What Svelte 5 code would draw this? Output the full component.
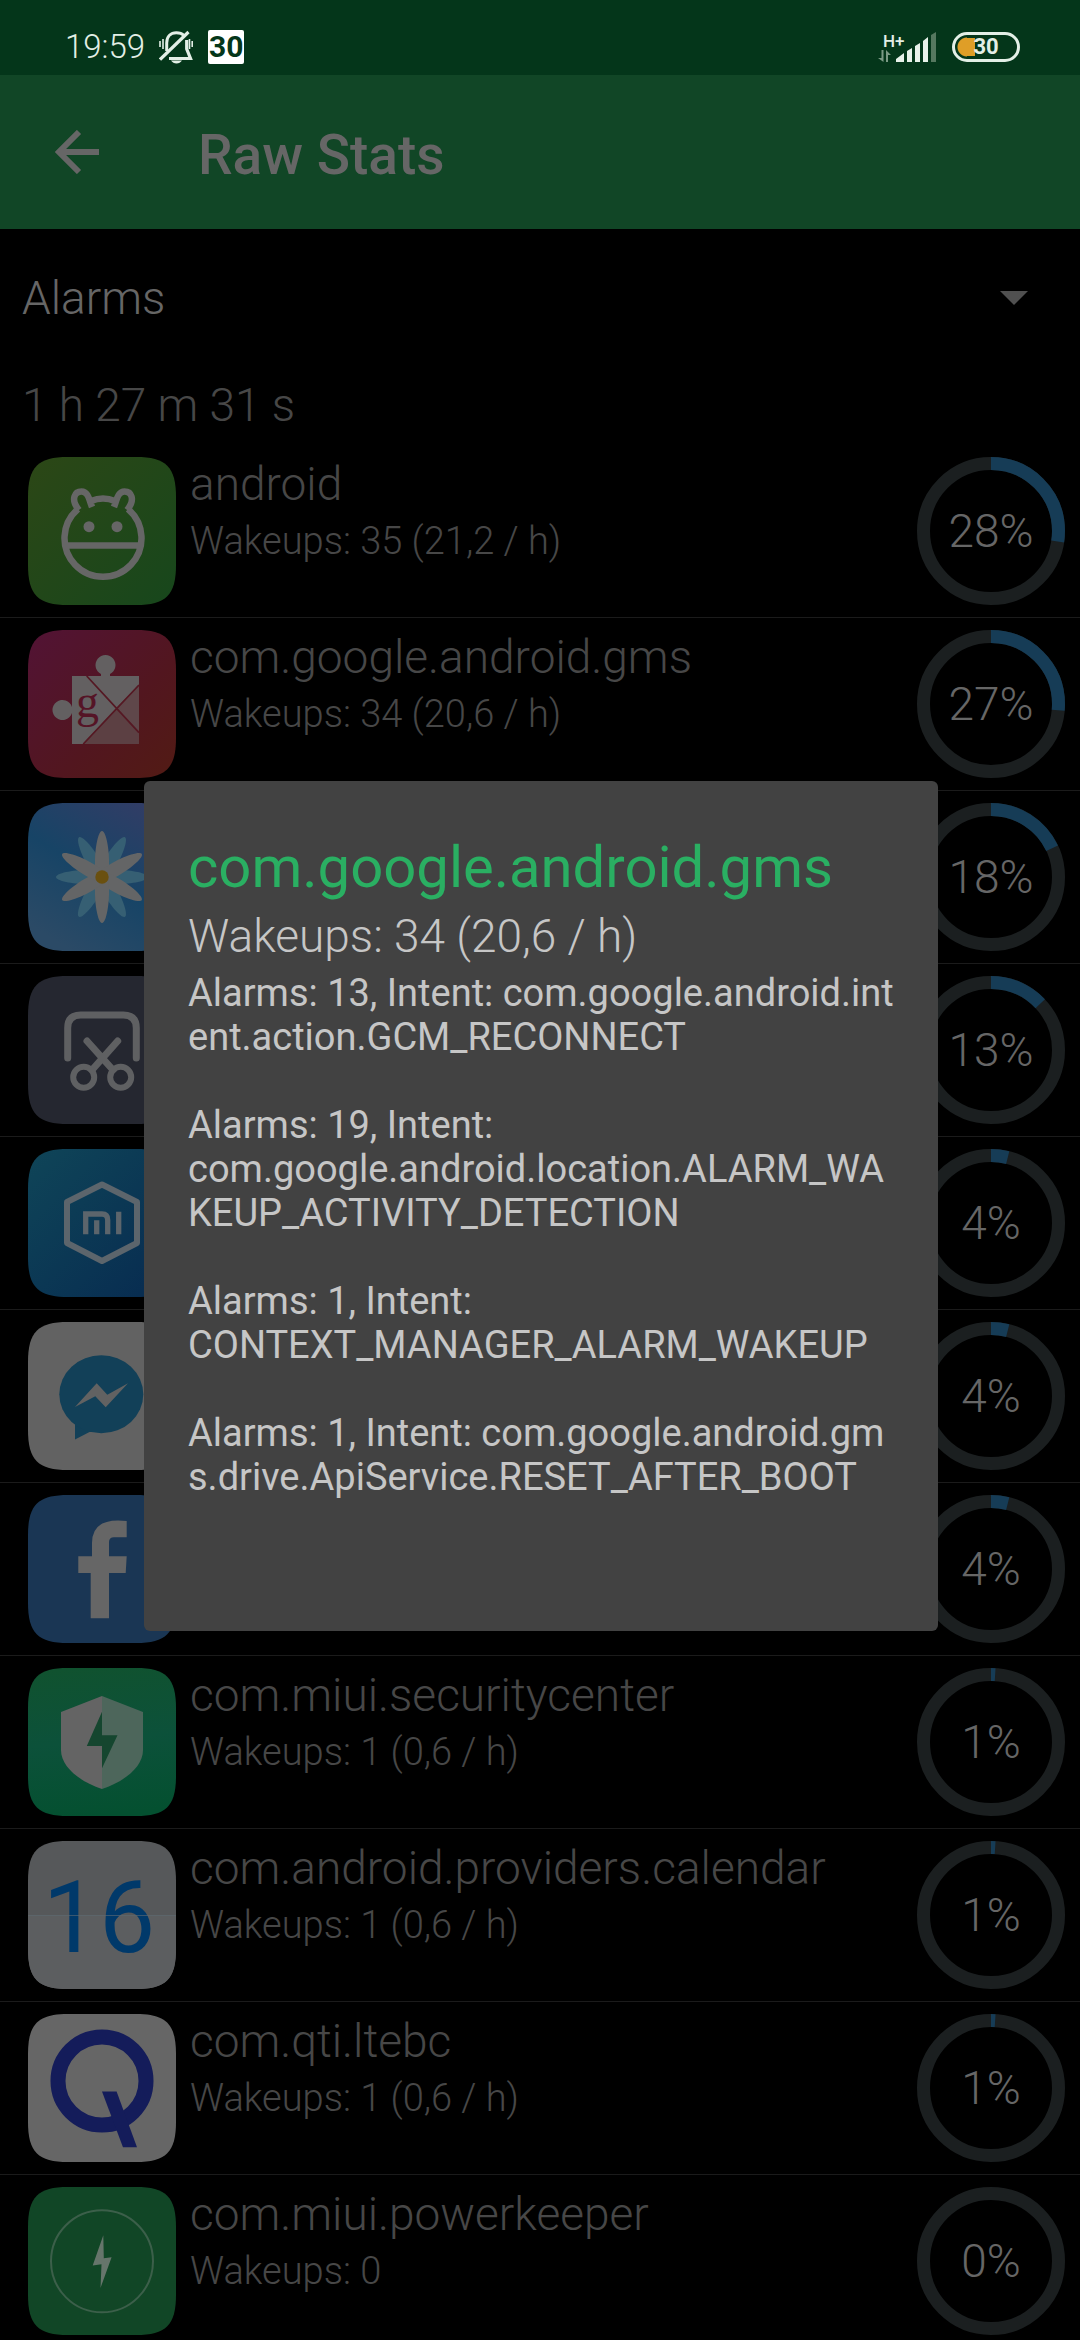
<script>
  const stats = [
    { icon: 'android', name: 'android', wakeups: '35 (21,2 / h)', percent: 28, arc: 27.5 },
    { icon: 'gms', name: 'com.google.android.gms', wakeups: '34 (20,6 / h)', percent: 27, arc: 26.5 },
    { icon: 'gallery', name: 'com.miui.gallery', wakeups: '23 (13,9 / h)', percent: 18, arc: 18 },
    { icon: 'scissors', name: 'com.miui.screenshot', wakeups: '16 (9,7 / h)', percent: 13, arc: 13 },
    { icon: 'mi', name: 'com.xiaomi.xmsf', wakeups: '5 (3,0 / h)', percent: 4, arc: 4 },
    { icon: 'messenger', name: 'com.facebook.orca', wakeups: '5 (3,0 / h)', percent: 4, arc: 4 },
    { icon: 'facebook', name: 'com.facebook.katana', wakeups: '5 (3,0 / h)', percent: 4, arc: 4 },
    { icon: 'security', name: 'com.miui.securitycenter', wakeups: '1 (0,6 / h)', percent: 1, arc: 1 },
    { icon: 'calendar', name: 'com.android.providers.calendar', wakeups: '1 (0,6 / h)', percent: 1, arc: 1 },
    { icon: 'qti', name: 'com.qti.ltebc', wakeups: '1 (0,6 / h)', percent: 1, arc: 1 },
    { icon: 'power', name: 'com.miui.powerkeeper', wakeups: '0', percent: 0, arc: 0 }
  ]

  const alarms = [
    'Alarms: 13, Intent: com.google.android.int\nent.action.GCM_RECONNECT',
    'Alarms: 19, Intent:\ncom.google.android.location.ALARM_WA\nKEUP_ACTIVITY_DETECTION',
    'Alarms: 1, Intent:\nCONTEXT_MANAGER_ALARM_WAKEUP',
    'Alarms: 1, Intent: com.google.android.gm\ns.drive.ApiService.RESET_AFTER_BOOT'
  ]

  // rows the dialog lies over keep only their icon and ring
  const selected = stats[1]
  const covered = ['gallery', 'scissors', 'mi', 'messenger', 'facebook']

  const tile = 'M74 0H108C138 0 148 10 148 40V108C148 138 138 148 108 148H40C10 148 0 138 0 108V40C0 10 10 0 40 0Z'
  const petal = 'M68 72C65 56 69 28 74 28S83 56 80 72Z'
</script>

<div class="screen">
  <div class="status">
    <span class="clock">19:59</span>
    <svg class="bell" width="34" height="34" viewBox="0 0 34 34" fill="none" stroke="#e3efe6">
      <path d="M7.7 21V13C7.7 6 12 2.7 17.3 2.7C20.500 2.700 23 3.500 25 5.500" stroke-width="3" />
      <path d="M27.700 10V19L31.500 28.500H10" stroke-width="3.200" />
      <path d="M1 29.500L29.500 2" stroke-width="3.200" />
      <path d="M12 30.500H23Q21 33.500 17.500 33.500T12 30.500Z" fill="#e3efe6" stroke="none" />
      <path d="M1 11V17M4 9V19M30.500 9V19M33.200 11V17" stroke-width="1.600" />
    </svg>
    <span class="day">30</span>
    <div class="status-right">
      <div class="network">
        <span>H+</span>
        <svg width="14" height="12" viewBox="0 0 14 12" fill="#7b9a85">
          <path d="M3.500 0H5.500V12L0 8H3.500ZM8 12V0L13 5H10V12Z" />
        </svg>
      </div>
      <svg class="signal" width="40" height="30" viewBox="0 0 40 30" fill="#e8f2ea">
        <path d="M0 30V27L8 21V30ZM11 30V19L16 16V30ZM19 30V14L24 11V30ZM27 30V9L32 5V30Z" />
        <path d="M35 30V3L40 0V30Z" fill="#55785f" />
      </svg>
      <span class="battery">30</span>
    </div>
  </div>

  <header>
    <button class="back" aria-label="Back">
      <svg width="44" height="44" viewBox="0 0 44 44" fill="none" stroke="#666" stroke-width="6">
        <path d="M44 22H5M24 2L4 22L24 42" />
      </svg>
    </button>
    <h1>Raw Stats</h1>
  </header>

  <main>
    <div class="picker">
      <select aria-label="Statistic">
        <option>Alarms</option>
      </select>
      <svg width="28" height="14" viewBox="0 0 28 14"><path d="M0 0H28L14 14Z" fill="#505050" /></svg>
    </div>
    <p class="duration">1 h 27 m 31 s</p>

    <ul>
      {#each stats as stat}
        <li>
          <svg class="icon" viewBox="0 0 148 148" aria-hidden="true">
            {#if stat.icon === 'android'}
              <defs>
                <linearGradient id="android-bg" x1="0" y1="0" x2="1" y2="1">
                  <stop offset="0" stop-color="#2c4716" />
                  <stop offset="1" stop-color="#17471c" />
                </linearGradient>
              </defs>
              <path d={tile} fill="url(#android-bg)" />
              <g fill="none" stroke="#666" stroke-width="6.500">
                <path d="M50 52A38.500 38.500 0 1 0 100 52M38 88.500H112" />
                <path d="M51 53C42 42 47 34.500 53.500 34.500C60 34.500 61 42 64 50M63 44Q75 39 87 44M99 53C108 42 103 34.500 96.500 34.500C90 34.500 89 42 86 50" />
              </g>
              <circle cx="61" cy="69.700" r="5.500" fill="#666" />
              <circle cx="89" cy="69.700" r="5.500" fill="#666" />
            {:else if stat.icon === 'gms'}
              <defs>
                <linearGradient id="gms-bg" x1="0" y1="0" x2="1" y2="1">
                  <stop offset="0" stop-color="#521335" />
                  <stop offset=".6" stop-color="#52161f" />
                  <stop offset="1" stop-color="#521b14" />
                </linearGradient>
              </defs>
              <path d={tile} fill="url(#gms-bg)" />
              <path d="M44 46H73V44A10 10 0 1 1 82 44V46H111V114H44V83A10 10 0 1 1 44 77Z" fill="#636061" />
              <path d="M111 55V114H55L88 78Z" fill="#5c4043" />
              <path d="M88 78L111 55V103Z" fill="#5f474a" />
              <path d="M58.700 46L111 102.700M111 55L55.300 114" stroke="#551823" stroke-width="1.800" />
              <text x="48" y="87" font-family="Liberation Serif, serif" font-size="46" font-weight="400" fill="#551426">g</text>
            {:else if stat.icon === 'gallery'}
              <defs>
                <linearGradient id="gallery-bg" x1=".9" y1="0" x2=".3" y2="1">
                  <stop offset="0" stop-color="#343c66" />
                  <stop offset=".55" stop-color="#174466" />
                  <stop offset="1" stop-color="#2b4a66" />
                </linearGradient>
              </defs>
              <path d={tile} fill="url(#gallery-bg)" />
              {#each [30, 90, 150, 210, 270, 330] as angle}
                <path d={petal} fill="#365f73" transform="rotate({angle} 74 74)" />
              {/each}
              {#each [0, 60, 120, 180, 240, 300] as angle}
                <path d={petal} fill="#646566" transform="rotate({angle} 74 74)" />
              {/each}
              <circle cx="74" cy="74" r="6.700" fill="#6a5010" />
            {:else if stat.icon === 'scissors'}
              <path d={tile} fill="#252730" />
              <g fill="none" stroke="#5f6062" stroke-width="7" stroke-linecap="round">
                <path d="M39.700 82V52Q39.700 39 52.700 39H95.300Q108.300 39 108.300 52V82" />
                <path d="M59 65L85 94M89.700 65L64 94" />
                <circle cx="55.700" cy="101.300" r="10.500" stroke-width="6" />
                <circle cx="92.700" cy="101.300" r="10.500" stroke-width="6" />
              </g>
            {:else if stat.icon === 'mi'}
              <defs>
                <linearGradient id="mi-bg" x1="0" y1="0" x2="1" y2="1">
                  <stop offset="0" stop-color="#0f4558" />
                  <stop offset="1" stop-color="#072a50" />
                </linearGradient>
              </defs>
              <path d={tile} fill="url(#mi-bg)" />
              <g fill="none" stroke="#5c656c" stroke-width="6" stroke-linejoin="round">
                <path d="M74 35.500L109 53V94L74 112L39 94V53Z" />
                <path d="M57.700 85.300V65H74Q79.700 65 79.700 71V85.300M68.700 71.300V85.300M90.700 62.700V85.300" stroke-width="5.300" stroke-linejoin="miter" />
              </g>
            {:else if stat.icon === 'messenger'}
              <path d={tile} fill="#626262" />
              <path d="M47 98V117.500L61.500 110H74V98Z" fill="#124058" />
              <ellipse cx="73.300" cy="72.300" rx="42" ry="39" fill="#124058" />
              <path d="M47 85L68.700 61.300L79.300 72.700L100 61.300L77.700 85.300L67.300 74.300Z" fill="#626262" />
            {:else if stat.icon === 'facebook'}
              <path d={tile} fill="#1a3654" />
              <path d="M62.700 123.300H81V78H97.700L98.700 61.300H81V47Q81 42.300 86 42.300H98.700V26Q64 22 64 48V61.300H50.300V78H62.700Z" fill="#666" />
            {:else if stat.icon === 'security'}
              <defs>
                <linearGradient id="security-bg" x1=".3" y1="0" x2=".4" y2="1">
                  <stop offset="0" stop-color="#10522f" />
                  <stop offset=".5" stop-color="#0c513a" />
                  <stop offset="1" stop-color="#045030" />
                </linearGradient>
              </defs>
              <path d={tile} fill="url(#security-bg)" />
              <path d="M74 28L33 44V82C33 98 50 113 74 121Z" fill="#646464" />
              <path d="M74 28L115 44V82C115 98 98 113 74 121Z" fill="#4d665b" />
              <path d="M74 43.700L58.800 78H74V100.300L89.500 67.300H74Z" fill="#15462f" />
            {:else if stat.icon === 'calendar'}
              <path d={tile} fill="#56585a" />
              <path d="M0 74.500H148V108C148 138 138 148 108 148H40C10 148 0 138 0 108Z" fill="#5c5e60" />
              <text x="71" y="111" text-anchor="middle" font-size="100" font-weight="400" fill="#00396a">16</text>
              <path d="M0 74.500H148" stroke="#5f6c74" stroke-width="1" opacity=".6" />
            {:else if stat.icon === 'qti'}
              <path d={tile} fill="#666" />
              <circle cx="74" cy="67" r="44" fill="none" stroke="#141c5a" stroke-width="15" />
              <path d="M74 77.400H88.600L109 133.300H95Z" fill="#141c5a" />
            {:else}
              <path d={tile} fill="#114626" />
              <circle cx="74" cy="74.300" r="51" fill="none" stroke="#3c5f4a" stroke-width="2" />
              <path d="M75.300 48.300L64.700 78.600L73.500 77.300L72.500 101L83.600 70.300L75.800 71.300Z" fill="#66756b" />
            {/if}
          </svg>

          <div class="info">
            {#if !covered.includes(stat.icon)}
              <h2>{stat.name}</h2>
              <p>Wakeups: {stat.wakeups}</p>
            {/if}
          </div>

          <div class="ring">
            <svg viewBox="0 0 148 148" fill="none" stroke-width="13" aria-hidden="true">
              <circle cx="74" cy="74" r="67.500" stroke="#1b1f20" />
              {#if stat.arc}
                <circle
                  cx="74"
                  cy="74"
                  r="67.500"
                  stroke="#163c56"
                  pathLength="100"
                  stroke-dasharray="{stat.arc} 100"
                  transform="rotate(-90 74 74)"
                />
              {/if}
            </svg>
            <span>{stat.percent}%</span>
          </div>
        </li>
      {/each}
    </ul>
  </main>

  <div class="overlay">
    <div class="dialog" role="dialog" aria-modal="true" aria-labelledby="dialog-title">
      <h2 id="dialog-title">{selected.name}</h2>
      <p class="wakeups">Wakeups: {selected.wakeups}</p>
      <div class="alarms">
        {#each alarms as alarm}
          <p>{alarm}</p>
        {/each}
      </div>
    </div>
  </div>
</div>

<style>
  :global(body) {
    margin: 0;
    background: #000;
  }

  .screen {
    display: flex;
    flex-direction: column;
    height: 100vh;
    overflow: hidden;
    background: #000;
    color: #474747;
    font-family: Roboto, sans-serif;
    font-weight: 300;
  }

  h1,
  h2,
  p,
  ul {
    margin: 0;
    padding: 0;
    font-weight: inherit;
  }

  svg {
    display: block;
    flex: none;
  }

  .status {
    display: flex;
    flex: none;
    align-items: center;
    box-sizing: border-box;
    height: 75px;
    padding: 18px 60px 0 65px;
    background: #04361a;
    color: #e3efe6;
  }

  .clock {
    font-size: 33px;
    line-height: 36px;
  }

  .bell {
    margin: 0 15px 0 14px;
  }

  .day {
    display: flex;
    align-items: center;
    justify-content: center;
    width: 36px;
    height: 34px;
    border-radius: 2px;
    background: #fff;
    color: #04361a;
    font-size: 30px;
    font-weight: 700;
  }

  .status-right {
    display: flex;
    align-items: flex-end;
    margin-left: auto;
  }

  .network {
    display: flex;
    flex-direction: column;
    width: 26px;
    margin-right: -8px;
  }

  .network span {
    margin-left: 5px;
    font-size: 17px;
    font-weight: 500;
    line-height: 18px;
  }

  .signal {
    margin-right: 16px;
  }

  .battery {
    display: flex;
    align-items: center;
    justify-content: center;
    box-sizing: border-box;
    width: 68px;
    height: 30px;
    border: 3px solid #e3efe6;
    border-radius: 15px;
    background: radial-gradient(circle at 12px 12px, #df9e27 9px, transparent 10px) 0 0 / 12px 100% no-repeat,
      linear-gradient(#df9e27, #df9e27) 12px 3px / 8px 18px no-repeat;
    font-size: 22px;
    font-weight: 700;
  }

  header {
    display: flex;
    flex: none;
    align-items: center;
    height: 154px;
    padding: 0 55px;
    background: #114626;
    color: #666;
  }

  .back {
    padding: 0;
    border: 0;
    background: none;
    cursor: pointer;
  }

  h1 {
    margin-left: 99px;
    padding-top: 5px;
    font-size: 55px;
    font-weight: 500;
  }

  main {
    flex: 1;
    min-height: 0;
    overflow-y: auto;
    scrollbar-width: none;
  }

  .picker {
    display: flex;
    align-items: center;
    height: 138px;
    padding: 0 52px 0 22px;
  }

  select {
    flex: 1;
    height: 54px;
    padding: 0;
    border: 0;
    background: none;
    color: #666;
    font: inherit;
    font-size: 46px;
    line-height: 54px;
    appearance: none;
  }

  .duration {
    padding: 11px 22px 13px;
    font-size: 46px;
    line-height: 54px;
  }

  ul {
    list-style: none;
  }

  li {
    display: flex;
    gap: 14px;
    height: 148px;
    padding: 12px 15px 12px 28px;
    border-bottom: 1px solid #1b1b1b;
  }

  .icon {
    width: 148px;
    height: 148px;
  }

  .info {
    flex: 1;
    min-width: 0;
  }

  .info h2 {
    font-size: 46px;
    line-height: 54px;
  }

  .info p {
    margin-top: 8px;
    font-size: 38px;
    line-height: 44px;
  }

  .ring {
    display: grid;
    flex: none;
    place-items: center;
    width: 148px;
    height: 148px;
    color: #666;
    font-size: 46px;
  }

  .ring svg,
  .ring span {
    grid-area: 1 / 1;
  }

  .ring svg {
    width: 148px;
  }

  .overlay {
    position: fixed;
    inset: 72px 0 0;
    display: flex;
    align-items: center;
    padding: 0 144px;
  }

  .dialog {
    flex: 1;
    padding: 44px;
    border-radius: 6px;
    background: #424242;
    color: #c6c6c6;
  }

  .dialog h2 {
    color: #2aaf62;
    font-size: 58px;
    font-weight: 400;
    line-height: 84px;
  }

  .wakeups {
    font-size: 46px;
    line-height: 54px;
  }

  .alarms {
    display: grid;
    gap: 44px;
    margin: 8px 0 88px;
    font-size: 38px;
    font-weight: 400;
    line-height: 44px;
    white-space: pre;
  }
</style>
